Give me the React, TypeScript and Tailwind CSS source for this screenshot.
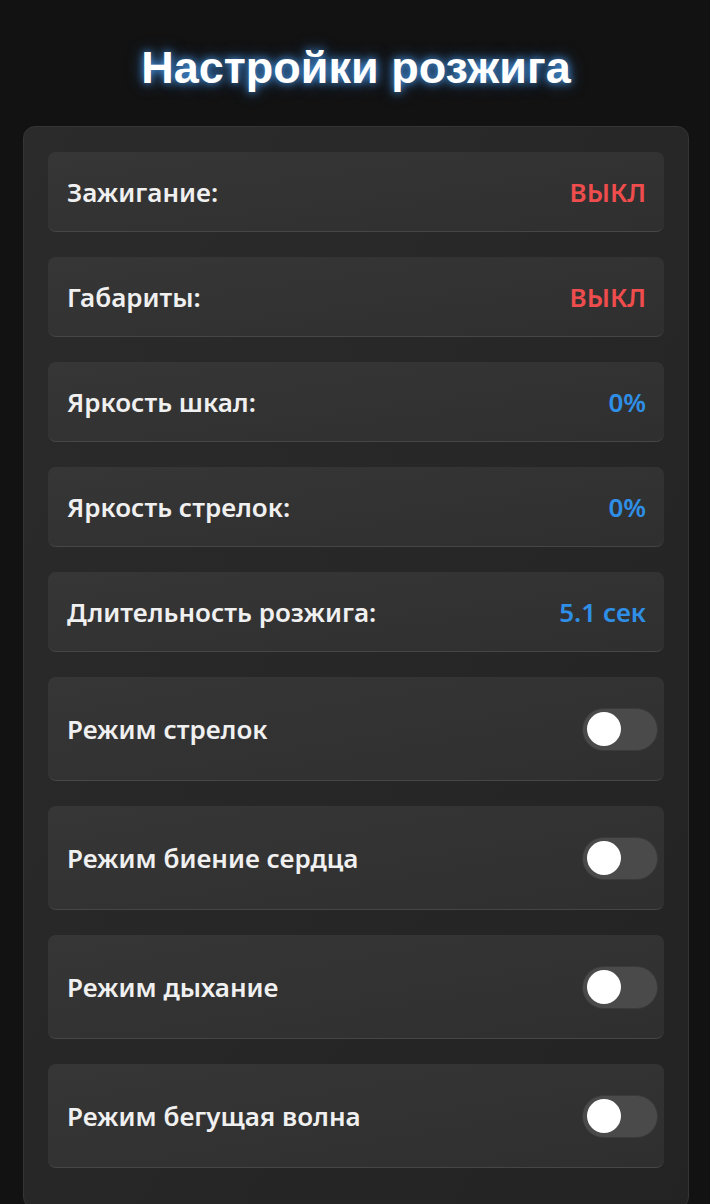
import React from "react";

const infoRows: { label: string; value: string; color: string }[] = [
  { label: "Зажигание:", value: "ВЫКЛ", color: "text-[#ef4d4d]" },
  { label: "Габариты:", value: "ВЫКЛ", color: "text-[#ef4d4d]" },
  { label: "Яркость шкал:", value: "0%", color: "text-[#2f8fe6]" },
  { label: "Яркость стрелок:", value: "0%", color: "text-[#2f8fe6]" },
  { label: "Длительность розжига:", value: "5.1 сек", color: "text-[#2f8fe6]" },
];

const toggles = ["Режим стрелок", "Режим биение сердца", "Режим дыхание", "Режим бегущая волна"];

function Toggle() {
  return (
    <div className="w-[76px] h-[43px] rounded-full bg-[#4a4a4a] border border-[#3a3a3a] flex items-center px-[4px]">
      <div className="w-[34px] h-[34px] rounded-full bg-white" />
    </div>
  );
}

export default function App() {
  return (
    <div className="min-h-[1204px] bg-[#121212] flex flex-col items-center pl-[2px]" style={{ fontFamily: "'Noto Sans', 'Open Sans', sans-serif" }}>
      <h1
        className="mt-[40px] text-[45px] leading-[56px] font-bold text-white text-center"
        style={{ fontFamily: "'Liberation Sans', Arial, sans-serif", textShadow: "0 0 8px rgba(80,170,255,0.9), 0 0 16px rgba(60,150,255,0.5)" }}
      >
        Настройки розжига
      </h1>
      <div className="mt-[30px] w-[666px] rounded-[12px] border border-[#353535] bg-gradient-to-br from-[#2b2b2b] to-[#232323] px-[24px] pt-[25px] pb-[40px] flex flex-col gap-[25px]">
        {infoRows.map((r) => (
          <div
            key={r.label}
            className="h-[80px] rounded-[8px] bg-gradient-to-br from-[#363636] to-[#2f2f2f] border-b border-[#464646] flex items-center justify-between pl-[19px] pr-[18px] pt-[1px]"
          >
            <span className="text-[26px] font-semibold text-[#f0f0f0]">{r.label}</span>
            <span className={`text-[26px] font-semibold ${r.color}`}>{r.value}</span>
          </div>
        ))}
        {toggles.map((t) => (
          <div
            key={t}
            className="h-[104px] rounded-[8px] bg-gradient-to-br from-[#363636] to-[#2f2f2f] border-b border-[#464646] flex items-center justify-between pl-[19px] pr-[6px] pt-[1px]"
          >
            <span className="text-[26px] font-semibold text-[#f0f0f0]">{t}</span>
            <Toggle />
          </div>
        ))}
      </div>
    </div>
  );
}
